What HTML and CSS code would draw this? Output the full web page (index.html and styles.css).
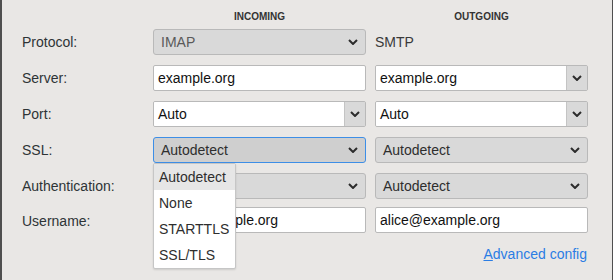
FILE: index.html
```html
<!DOCTYPE html>
<html lang="en">
<head>
    <meta charset="UTF-8">
    <title>Account settings</title>
    <link rel="stylesheet" href="styles.css">
</head>
<body>
    <div class="window">
        <div class="form">
            <div></div>
            <div class="col-head">INCOMING</div>
            <div class="col-head">OUTGOING</div>

            <div class="label">Protocol:</div>
            <div class="select disabled">
                <span>IMAP</span>
                <svg class="chev" width="10" height="6" viewBox="0 0 10 6"><polyline points="1,1 5,5 9,1"/></svg>
            </div>
            <div class="plain">SMTP</div>

            <div class="label">Server:</div>
            <div class="entry">example.org</div>
            <div class="combo">
                <div class="combo-text">example.org</div>
                <div class="combo-btn"><svg class="chev" width="10" height="6" viewBox="0 0 10 6"><polyline points="1,1 5,5 9,1"/></svg></div>
            </div>

            <div class="label">Port:</div>
            <div class="combo">
                <div class="combo-text">Auto</div>
                <div class="combo-btn"><svg class="chev" width="10" height="6" viewBox="0 0 10 6"><polyline points="1,1 5,5 9,1"/></svg></div>
            </div>
            <div class="combo">
                <div class="combo-text">Auto</div>
                <div class="combo-btn"><svg class="chev" width="10" height="6" viewBox="0 0 10 6"><polyline points="1,1 5,5 9,1"/></svg></div>
            </div>

            <div class="label">SSL:</div>
            <div class="popup-anchor">
                <div class="select focused">
                    <span>Autodetect</span>
                    <svg class="chev" width="10" height="6" viewBox="0 0 10 6"><polyline points="1,1 5,5 9,1"/></svg>
                </div>
                <ul class="popup">
                    <li class="hover">Autodetect</li>
                    <li>None</li>
                    <li>STARTTLS</li>
                    <li>SSL/TLS</li>
                </ul>
            </div>
            <div class="select">
                <span>Autodetect</span>
                <svg class="chev" width="10" height="6" viewBox="0 0 10 6"><polyline points="1,1 5,5 9,1"/></svg>
            </div>

            <div class="label">Authentication:</div>
            <div class="select">
                <span>Autodetect</span>
                <svg class="chev" width="10" height="6" viewBox="0 0 10 6"><polyline points="1,1 5,5 9,1"/></svg>
            </div>
            <div class="select">
                <span>Autodetect</span>
                <svg class="chev" width="10" height="6" viewBox="0 0 10 6"><polyline points="1,1 5,5 9,1"/></svg>
            </div>

            <div class="label last">Username:</div>
            <div class="entry last">alice@example.org</div>
            <div class="entry last">alice@example.org</div>
        </div>

        <div class="footer">
            <a class="link" href="#"><u>A</u>dvanced config</a>
        </div>
    </div>
</body>
</html>
```

FILE: styles.css
```css
body {
    margin: 0;
    background-color: #e9e7e5;
    font-family: "Liberation Sans", Arial, sans-serif;
    font-size: 14px;
    color: #2e3436;
}
.window {
    width: 610px;
    height: 280px;
    border-left: 2px solid #4f4f4f;
    border-right: 1px solid #4f4f4f;
    background-color: #e9e7e5;
}
.form {
    display: grid;
    grid-template-columns: 122px 213px 213px;
    grid-template-rows: 19px;
    grid-auto-rows: 26px;
    column-gap: 9px;
    row-gap: 10px;
    padding-left: 20px;
}
.col-head {
    font-size: 10px;
    font-weight: bold;
    color: #333;
    text-align: center;
    padding-top: 11px;
}
.label {
    display: flex;
    align-items: center;
}
.plain {
    display: flex;
    align-items: center;
    color: #3a3a3a;
}
.last {
    margin-top: -2px;
}
.entry {
    box-sizing: border-box;
    height: 26px;
    background: #fff;
    border: 1px solid #b9b9b9;
    border-radius: 2px;
    padding: 0 4px;
    line-height: 24px;
    color: #111;
}
.select {
    box-sizing: border-box;
    height: 26px;
    display: flex;
    align-items: center;
    justify-content: space-between;
    background: #d9d9d9;
    border: 1px solid #b9b9b9;
    border-radius: 3px;
    padding: 0 7px 0 7px;
    color: #2e2e2e;
}
.select.disabled {
    color: #5a5a5a;
}
.select.focused {
    background: #cfcfcf;
    border-color: #3d8ee6;
}
.chev {
    fill: none;
    stroke: #2c2c2c;
    stroke-width: 2;
}
.combo {
    box-sizing: border-box;
    height: 26px;
    display: flex;
    border: 1px solid #b9b9b9;
    border-radius: 2px;
    overflow: hidden;
}
.combo-text {
    flex: 1;
    background: #fff;
    padding: 0 4px;
    line-height: 24px;
    color: #111;
}
.combo-btn {
    width: 20px;
    border-left: 1px solid #c4c4c4;
    background: #d9d9d9;
    display: flex;
    align-items: center;
    justify-content: center;
}
.popup-anchor {
    position: relative;
}
.popup {
    position: absolute;
    left: 0;
    top: 26px;
    z-index: 2;
    width: 83px;
    box-sizing: border-box;
    margin: 0;
    padding: 0;
    list-style: none;
    background: #fff;
    border: 1px solid #c6c6c6;
    border-radius: 2px;
    box-shadow: 0 1px 2px rgba(0,0,0,0.12);
    color: #2e2e2e;
}
.popup li {
    height: 26px;
    line-height: 26px;
    padding-left: 5px;
}
.popup li.hover {
    background: #e6e6e6;
}
.footer {
    display: flex;
    justify-content: flex-end;
    padding-right: 25px;
    padding-top: 11px;
}
.link {
    color: #2b7de4;
    text-decoration: none;
}
```
